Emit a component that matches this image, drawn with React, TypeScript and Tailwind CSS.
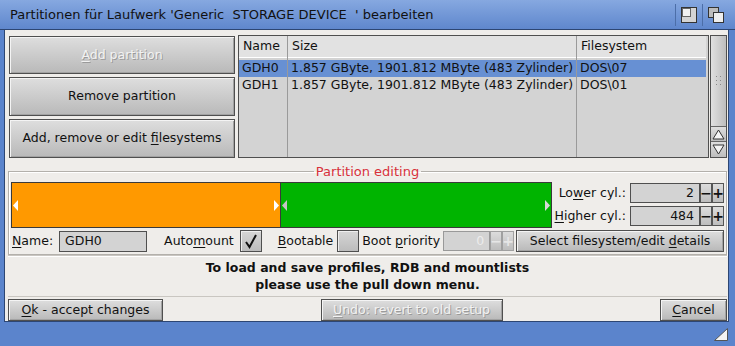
import React from "react";

const U = ({ children }: { children: React.ReactNode }) => (
  <span className="underline decoration-1 underline-offset-[2px]">{children}</span>
);

const Btn = ({
  children,
  className = "",
  disabled = false,
}: {
  children: React.ReactNode;
  className?: string;
  disabled?: boolean;
}) => (
  <div
    className={`flex items-center justify-center border border-[#4f4f4f] bg-linear-to-b from-[#dedede] to-[#b9b9b9] shadow-[inset_1px_1px_0_#f4f4f4,inset_-1px_-1px_0_#a2a2a2] ${
      disabled ? "text-[#f2f2f2] [text-shadow:1px_1px_0_#9a9a9a]" : "text-[#111]"
    } ${className}`}
  >
    {children}
  </div>
);

const Check = ({ checked }: { checked?: boolean }) => (
  <div className="flex h-[22px] w-[22px] items-center justify-center border border-[#4f4f4f] bg-linear-to-b from-[#d6d6d6] to-[#bcbcbc] shadow-[inset_1px_1px_0_#efefef]">
    {checked && (
      <svg width="16" height="16" viewBox="0 0 16 16">
        <path d="M3 9 L6.5 14 L13 2" fill="none" stroke="#111" strokeWidth="2" />
      </svg>
    )}
  </div>
);

const PlusMinus = ({ disabled = false }: { disabled?: boolean }) => (
  <div className={`flex h-full ${disabled ? "text-[#e6e6e6]" : "text-[#111]"}`}>
    {["−", "+"].map((s) => (
      <div
        key={s}
        className={`flex w-[12px] items-center justify-center border bg-linear-to-b from-[#dcdcdc] to-[#bdbdbd] text-[14px] font-bold leading-none ${
          disabled ? "border-[#a0a0a0]" : "border-[#555]"
        }`}
      >
        {s}
      </div>
    ))}
  </div>
);

const Arrow = ({ dir, color }: { dir: "l" | "r"; color: string }) => (
  <svg width="6" height="11" viewBox="0 0 6 11">
    <polygon points={dir === "l" ? "5,0 5,11 0,5.5" : "1,0 1,11 6,5.5"} fill={color} />
  </svg>
);

const TitleGadgets = () => (
  <div className="flex items-center gap-[5px]">
    <div className="h-[22px] w-px bg-[#4c6ea8]" />
    <svg width="16" height="16" viewBox="0 0 16 16">
      <rect x="0.5" y="0.5" width="15" height="15" fill="#bdbdbd" stroke="#333" />
      <rect x="1.5" y="1.5" width="8" height="8" fill="#f2f2f2" stroke="#666" />
      <rect x="1" y="10" width="14" height="5" fill="#d4d4d4" />
      <rect x="10" y="1" width="5" height="9" fill="#d4d4d4" />
    </svg>
    <div className="h-[22px] w-px bg-[#4c6ea8]" />
    <svg width="16" height="16" viewBox="0 0 16 16">
      <rect x="0.5" y="0.5" width="10" height="10" fill="#bcbcbc" stroke="#333" />
      <rect x="5.5" y="5.5" width="10" height="10" fill="#eeeeee" stroke="#333" />
    </svg>
  </div>
);

const rows = [
  { name: "GDH0", size: "1.857 GByte, 1901.812 MByte (483 Zylinder)", fs: "DOS\\07", sel: true },
  { name: "GDH1", size: "1.857 GByte, 1901.812 MByte (483 Zylinder)", fs: "DOS\\01", sel: false },
];

const ListView = () => {
  const cols: { title: string; key: "name" | "size" | "fs"; w: string }[] = [
    { title: "Name", key: "name", w: "w-[49px] border-r border-[#9a9a9a]" },
    { title: "Size", key: "size", w: "w-[289px] border-r border-[#9a9a9a]" },
    { title: "Filesystem", key: "fs", w: "flex-1" },
  ];
  return (
    <div className="flex flex-1 border border-[#4f4f4f] bg-[#d3d3d3] pr-[2px]">
      {cols.map((c) => (
        <div key={c.key} className={`flex flex-col ${c.w}`}>
          <div className="flex h-[22px] items-center border-b border-white bg-[#e2e2e2] pl-[4px]">
            {c.title}
          </div>
          <div className="h-[2px]" />
          {rows.map((r) => (
            <div
              key={r.name}
              className={`flex h-[17px] items-center pl-[3px] ${r.sel ? "bg-[#6790d3]" : ""}`}
            >
              {r[c.key]}
            </div>
          ))}
        </div>
      ))}
    </div>
  );
};

const ScrollBar = () => (
  <div className="flex w-[17px] flex-col border border-[#4f4f4f] bg-[#c8c8c8]">
    <div className="flex flex-1 items-center justify-center border-b border-[#666] bg-linear-to-r from-[#e0e0e0] to-[#bdbdbd]">
      <svg width="6" height="10" viewBox="0 0 6 10">
        {[0, 4, 8].map((y) => (
          <g key={y}>
            <rect x="0" y={y} width="1" height="1" fill="#888" />
            <rect x="4" y={y} width="1" height="1" fill="#888" />
          </g>
        ))}
      </svg>
    </div>
    {["up", "down"].map((d) => (
      <div key={d} className="flex h-[15px] items-center justify-center border-b border-[#666] bg-linear-to-b from-[#dedede] to-[#bdbdbd] last:border-b-0">
        <svg width="13" height="11" viewBox="0 0 13 11">
          <polygon
            points={d === "up" ? "6.5,1 12,10 1,10" : "1,1 12,1 6.5,10"}
            fill="#f4f4f4"
            stroke="#333"
          />
        </svg>
      </div>
    ))}
  </div>
);

const Field = ({ value, className = "", align = "left", disabled = false }: { value: string; className?: string; align?: "left" | "right"; disabled?: boolean }) => (
  <div
    className={`flex h-full items-center border bg-[#d3d3d3] px-[5px] ${
      align === "right" ? "justify-end" : "justify-start"
    } ${disabled ? "text-[#ececec] border-[#999]" : "border-[#4f4f4f]"} ${className}`}
  >
    {value}
  </div>
);

export default function App() {
  return (
    <div className="flex h-[346px] w-[735px] flex-col whitespace-nowrap bg-[#5b84cc] font-['DejaVu_Sans',sans-serif] text-[12.5px] text-[#111]">
      {/* TITLE */}
      <div className="flex h-[30px] items-center justify-between border-b border-[#2d4673] bg-linear-to-b from-[#86a8e0] to-[#5f87cd] pl-[10px] pr-[11px] text-[13px]">
        <span className="whitespace-pre">Partitionen für Laufwerk 'Generic  STORAGE DEVICE  ' bearbeiten</span>
        <TitleGadgets />
      </div>

      <div className="flex">
        <div className="w-[4px]" />
        {/* CONTENT */}
        <div className="flex h-[292px] w-[725px] flex-col border-x border-b border-[#2d4673] bg-[#efedea] pl-[3px] pr-[1px]">
          {/* TOP */}
          <div className="box-content flex h-[123px] gap-[3px] pl-[1px] pt-[5px]">
            <div className="flex w-[226px] flex-col gap-[3px] pt-[1px]">
              <Btn disabled className="h-[38px]">
                <span>
                  <U>A</U>dd partition
                </span>
              </Btn>
              <Btn className="h-[39px]">Remove partition</Btn>
              <Btn className="h-[39px]">
                <span>
                  Add, remove or edit <U>f</U>ilesystems
                </span>
              </Btn>
            </div>
            <div className="flex flex-1 gap-[1px]">
              <ListView />
              <ScrollBar />
            </div>
          </div>

          {/* PARTITION EDITING */}
          <fieldset className="mt-[6px] h-[91px] border border-[#b3b0ab] px-[2px] pb-[2px] shadow-[inset_1px_1px_0_#fff,1px_1px_0_#fff]">
            <legend className="mx-auto px-[2px] text-[13px] leading-[15px] text-[#d8313b]">Partition editing</legend>
            <div className="flex pt-[3px]">
              <div className="flex h-[46px] w-[541px] gap-[1px] border border-[#3a3a3a] bg-[#3a3a3a]">
                <div className="flex w-[268px] items-center justify-between bg-[#ff9900] px-[1px]">
                  <Arrow dir="l" color="#ffffff" />
                  <Arrow dir="r" color="#ffffff" />
                </div>
                <div className="flex flex-1 items-center justify-between bg-[#00b400] px-[1px]">
                  <Arrow dir="l" color="#c4c4c4" />
                  <Arrow dir="r" color="#d8d8d8" />
                </div>
              </div>
              <div className="flex flex-1 flex-col gap-[3px] pt-[1px]">
                {[
                  { l: <>Lo<U>w</U>er cyl.:</>, v: "2" },
                  { l: <><U>H</U>igher cyl.:</>, v: "484" },
                ].map((r, i) => (
                  <div key={i} className="flex h-[20px] items-center">
                    <div className="flex flex-1 justify-end">{r.l}</div>
                    <div className="ml-[4px] h-full w-[70px]">
                      <Field value={r.v} align="right" />
                    </div>
                    <PlusMinus />
                  </div>
                ))}
              </div>
            </div>
            <div className="mt-[2px] flex h-[22px] items-center">
              <span className="ml-[1px]">
                <U>N</U>ame:
              </span>
              <div className="ml-[6px] h-[21px] w-[88px]">
                <Field value="GDH0" />
              </div>
              <span className="ml-[17px]">
                Auto<U>m</U>ount
              </span>
              <div className="ml-[6px]">
                <Check checked />
              </div>
              <span className="ml-[16px]">
                <U>B</U>ootable
              </span>
              <div className="ml-[4px]">
                <Check />
              </div>
              <span className="ml-[3px]">
                Boot <U>p</U>riority
              </span>
              <div className="ml-[3px] flex h-[20px]">
                <div className="w-[47px]">
                  <Field value="0" align="right" disabled />
                </div>
                <PlusMinus disabled />
              </div>
              <Btn className="ml-[2px] h-[22px] flex-1">
                <span>
                  Select filesystem/edit <U>d</U>etails
                </span>
              </Btn>
            </div>
          </fieldset>

          {/* INFO */}
          <div className="flex h-[42px] flex-col items-center justify-center border-y border-[#c9c6c1] font-bold leading-[17px] shadow-[inset_0_1px_0_#fff]">
            <div>To load and save profiles, RDB and mountlists</div>
            <div>please use the pull down menu.</div>
          </div>

          {/* BUTTONS */}
          <div className="mt-[2px] flex h-[22px] items-stretch justify-between">
            <Btn className="w-[155px]">
              <span>
                <U>O</U>k - accept changes
              </span>
            </Btn>
            <Btn disabled className="w-[182px]">
              <span>
                <U>U</U>ndo: revert to old setup
              </span>
            </Btn>
            <Btn className="w-[67px]">
              <span>
                <U>C</U>ancel
              </span>
            </Btn>
          </div>
        </div>
        <div className="w-[6px]" />
      </div>

      {/* BOTTOM BORDER */}
      <div className="flex flex-1 items-center justify-end pr-[7px]">
        <svg width="14" height="13" viewBox="0 0 14 13">
          <polygon points="13.5,0.5 13.5,12.5 0.5,12.5" fill="#f4f4f4" stroke="#555" />
        </svg>
      </div>
    </div>
  );
}
